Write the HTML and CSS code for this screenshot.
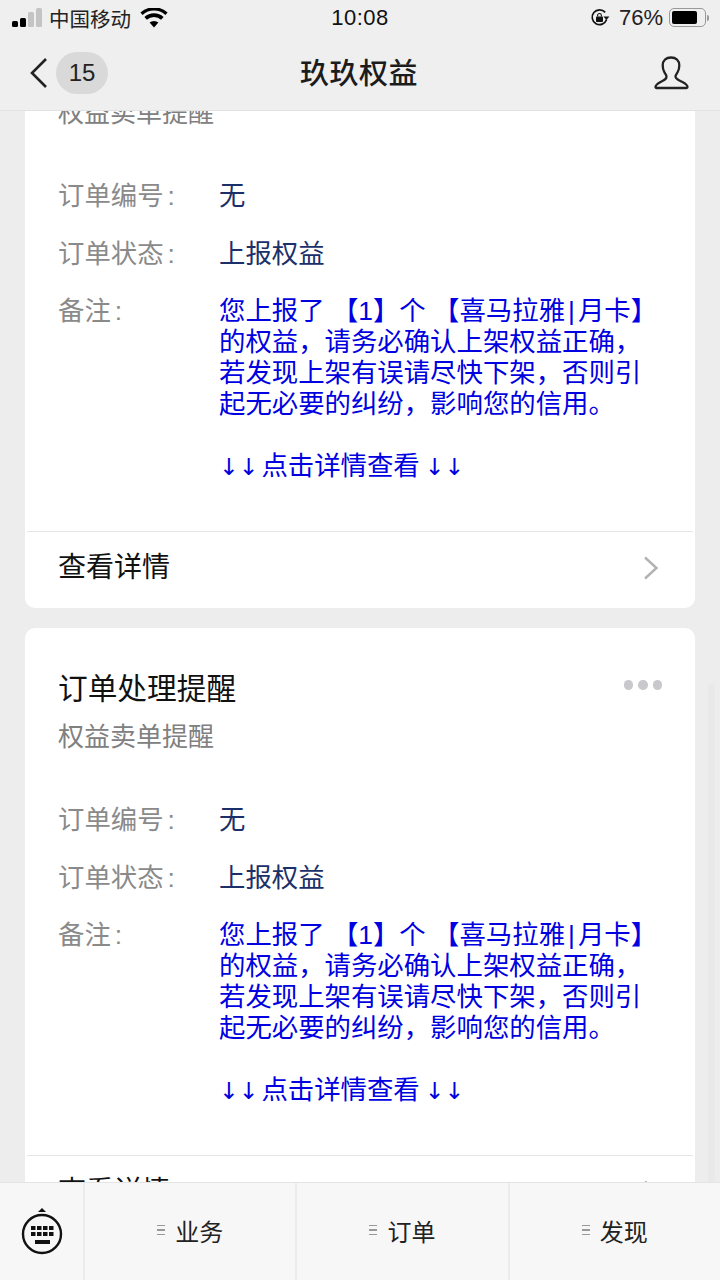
FILE: index.html
```html
<!DOCTYPE html>
<html lang="zh-CN">
<head>
	<meta charset="UTF-8">
	<title>玖玖权益</title>
	<link rel="stylesheet" href="styles.css">
</head>
<body>
	<div class="page">
		<header class="top">
			<div class="status">
				<div class="status-left">
					<ul class="signal"><li></li><li></li><li></li><li></li></ul>
					<span class="carrier">中国移动</span>
					<svg class="wifi" width="28" height="20" viewBox="0 0 28 20"><path d="M14 19.500 9.600 14.600a6.600 6.600 0 0 1 8.800 0zM6.900 11.700 4.400 8.900a14.400 14.400 0 0 1 19.200 0l-2.500 2.800a10.600 10.600 0 0 0-14.200 0zM2.600 7 .4 4.500a20.300 20.300 0 0 1 27.200 0L25.400 7a17 17 0 0 0-22.800 0z" fill="#000"/></svg>
				</div>
				<span class="time">10:08</span>
				<div class="status-right">
					<svg width="20" height="20" viewBox="0 0 20 20"><path d="M16.600 11.600A7.400 7.400 0 1 1 15.200 4.400" fill="none" stroke="#111" stroke-width="1.700"/><path d="M13.400 8.600h6l-3 3.400z" fill="#111"/><rect x="6" y="8.600" width="7" height="5.400" rx=".8" fill="#111"/><path d="M7.600 8.600V7.400a1.900 1.900 0 0 1 3.800 0v1.200" fill="none" stroke="#111" stroke-width="1.100"/></svg>
					<span class="percent">76%</span>
					<div class="battery"><div class="battery-level"></div></div>
					<div class="battery-tip"></div>
				</div>
			</div>
			<nav class="nav">
				<div class="nav-left">
					<svg width="20" height="32" viewBox="0 0 20 32"><path d="M17 2 3 16l14 14" fill="none" stroke="#222" stroke-width="2.600"/></svg>
					<span class="count">15</span>
				</div>
				<h1 class="nav-title">玖玖权益</h1>
				<svg class="user" width="36" height="34" viewBox="0 0 36 34"><path d="M13.500 20.500c0-1.500-1.200-2.500-2.200-4.500C10 13.500 9.700 11.500 9.700 9.500 9.700 4.500 13 1.500 18 1.500s8.300 3 8.300 8c0 2-.3 4-1.600 6.500-1 2-2.200 3-2.200 4.500 0 2.500 3 3.500 6.500 5.300 3.300 1.700 5.500 3.200 5.500 5.200 0 .6-.4 1-1 1H3.500c-.6 0-1-.4-1-1 0-2 2.200-3.500 5.500-5.200 3.500-1.800 5.500-2.800 5.500-5.300z" fill="none" stroke="#222" stroke-width="2.300"/></svg>
			</nav>
		</header>

		<main class="content">
			<section class="card card-first">
				<div class="card-body">
					<div class="card-head">
						<h2 class="card-title">订单处理提醒</h2>
						<div class="dots"><i></i><i></i><i></i></div>
					</div>
					<p class="card-sub">权益卖单提醒</p>
					<dl class="rows">
						<div class="row"><dt>订单编号<span class="colon">:</span></dt><dd>无</dd></div>
						<div class="row"><dt>订单状态<span class="colon">:</span></dt><dd>上报权益</dd></div>
						<div class="row"><dt>备注<span class="colon">:</span></dt><dd class="note">您上报了 【1】个 【喜马拉雅<span class="sep">|</span>月卡】的权益，请务必确认上架权益正确，若发现上架有误请尽快下架，否则引起无必要的纠纷，影响您的信用。<br><br><span class="arrows">↓↓</span>点击详情查看<span class="arrows">↓↓</span></dd></div>
					</dl>
				</div>
				<div class="card-foot">
					<span class="foot-text">查看详情</span>
					<svg width="16" height="24" viewBox="0 0 16 24"><path d="M2 1.500 13.500 12 2 22.500" fill="none" stroke="#b2b2b2" stroke-width="2.400"/></svg>
				</div>
			</section>

			<section class="card">
				<div class="card-body">
					<div class="card-head">
						<h2 class="card-title">订单处理提醒</h2>
						<div class="dots"><i></i><i></i><i></i></div>
					</div>
					<p class="card-sub">权益卖单提醒</p>
					<dl class="rows">
						<div class="row"><dt>订单编号<span class="colon">:</span></dt><dd>无</dd></div>
						<div class="row"><dt>订单状态<span class="colon">:</span></dt><dd>上报权益</dd></div>
						<div class="row"><dt>备注<span class="colon">:</span></dt><dd class="note">您上报了 【1】个 【喜马拉雅<span class="sep">|</span>月卡】的权益，请务必确认上架权益正确，若发现上架有误请尽快下架，否则引起无必要的纠纷，影响您的信用。<br><br><span class="arrows">↓↓</span>点击详情查看<span class="arrows">↓↓</span></dd></div>
					</dl>
				</div>
				<div class="card-foot">
					<span class="foot-text">查看详情</span>
					<svg width="16" height="24" viewBox="0 0 16 24"><path d="M2 1.500 13.500 12 2 22.500" fill="none" stroke="#b2b2b2" stroke-width="2.400"/></svg>
				</div>
			</section>
			<div class="scrollbar"></div>
		</main>

		<footer class="tabbar">
			<div class="tab-key">
				<svg width="42" height="48" viewBox="0 0 42 48"><path d="M21 1l4 4h-8z" fill="#111"/><circle cx="21" cy="27" r="19" fill="none" stroke="#111" stroke-width="2.400"/><g fill="#111"><rect x="10" y="19" width="4.500" height="4"/><rect x="16" y="19" width="4.500" height="4"/><rect x="22" y="19" width="4.500" height="4"/><rect x="28" y="19" width="4.500" height="4"/><rect x="10" y="25" width="4.500" height="4"/><rect x="16" y="25" width="4.500" height="4"/><rect x="22" y="25" width="4.500" height="4"/><rect x="28" y="25" width="4.500" height="4"/><rect x="14" y="33" width="15" height="4"/></g></svg>
			</div>
			<div class="tab"><span class="tab-mark"><i></i><i></i><i></i></span>业务</div>
			<div class="tab"><span class="tab-mark"><i></i><i></i><i></i></span>订单</div>
			<div class="tab"><span class="tab-mark"><i></i><i></i><i></i></span>发现</div>
		</footer>
	</div>
</body>
</html>
```

FILE: styles.css
```css
* {
	margin:0;
	padding:0;
	box-sizing:border-box;
}
html,body {
	height:100%;
	overflow:hidden;
}
body {
	font-family:"Liberation Sans","Noto Sans CJK SC",sans-serif;
	background:#ededed;
}
ul {
	list-style:none;
}
.page {
	display:flex;
	flex-direction:column;
	height:1280px;
}
.top {
	flex:none;
	height:111px;
	background:#efefef;
	border-bottom:1px solid #e2e2e2;
	position:relative;
	z-index:2;
}
.status {
	height:35px;
	padding:0 9px 0 12px;
	display:grid;
	grid-template-columns:1fr auto 1fr;
	align-items:center;
}
.status-left {
	display:flex;
	align-items:center;
}
.signal {
	display:flex;
	align-items:flex-end;
	gap:2px;
	height:19px;
	margin-right:7px;
}
.signal li {
	width:6px;
	background:#c4c4c4;
	border-radius:1.500px;
}
.signal li:nth-child(1) {
	height:6px;
	background:#000;
}
.signal li:nth-child(2) {
	height:9px;
	background:#000;
}
.signal li:nth-child(3) {
	height:15px;
}
.signal li:nth-child(4) {
	height:19px;
}
.carrier {
	font-size:20.500px;
	color:#222;
}
.wifi {
	margin-left:9px;
}
.time {
	font-size:22px;
	color:#111;
	letter-spacing:.5px;
	margin-right:3px;
}
.status-right {
	display:flex;
	align-items:center;
	justify-content:flex-end;
}
.percent {
	font-size:22px;
	color:#222;
	margin-left:9px;
}
.battery {
	width:37px;
	height:19px;
	margin-left:6px;
	border:1.500px solid #999;
	border-radius:5px;
	padding:2px;
}
.battery-level {
	width:76%;
	height:100%;
	min-width:25px;
	background:#000;
	border-radius:2px;
}
.battery-tip {
	width:2px;
	height:6px;
	margin-left:1px;
	margin-right:2px;
	background:#999;
	border-radius:0 2px 2px 0;
}
.nav {
	height:75px;
	padding:0 31px 0 29px;
	display:flex;
	align-items:center;
	justify-content:space-between;
	position:relative;
}
.nav-left {
	display:flex;
	align-items:center;
	gap:7px;
}
.count {
	width:52px;
	height:42px;
	border-radius:21px;
	background:#d9d9d9;
	font-size:24px;
	color:#222;
	display:flex;
	align-items:center;
	justify-content:center;
}
.nav-title {
	position:absolute;
	left:0;
	right:2px;
	padding-bottom:4px;
	text-align:center;
	font-size:29px;
	font-weight:500;
	color:#1c1c1c;
	letter-spacing:.5px;
	pointer-events:none;
}
.content {
	flex:1;
	min-height:0;
	overflow:hidden;
	position:relative;
	padding:0 25px;
}
.card {
	background:#fff;
	border-radius:10px;
	margin-bottom:20px;
}
.card-first {
	margin-top:-107px;
}
.card-body {
	height:527px;
	padding:40px 33px 0;
}
.card-head {
	display:flex;
	justify-content:space-between;
	align-items:flex-start;
}
.card-title {
	font-size:29.700px;
	font-weight:400;
	line-height:42px;
	color:#111;
}
.dots {
	display:flex;
	gap:5px;
	padding-top:12px;
}
.dots i {
	width:9.500px;
	height:9.500px;
	border-radius:50%;
	background:#c8c8cd;
}
.card-sub {
	font-size:26px;
	line-height:36px;
	margin-top:9px;
	color:#808080;
}
.rows {
	margin-top:50px;
	font-size:26.400px;
	line-height:31px;
}
.row {
	display:flex;
	margin-bottom:26.500px;
}
.row dt {
	flex:none;
	width:162px;
	color:#8a8a8a;
}
.colon {
	margin-left:4px;
}
.row dd {
	flex:1;
	margin-left:-1px;
	color:#1b3068;
}
.row .note {
	color:#0000e0;
	width:432px;
	margin-right:-5px;
}
.sep {
	margin:0 3px;
}
.arrows {
	font-family:"DejaVu Sans",sans-serif;
	font-size:23.500px;
	margin:0 3px 0 0;
}
.arrows:last-child {
	margin:0 0 0 5px;
}
.card-foot {
	height:77px;
	margin-left:2px;
	margin-right:2px;
	padding:0 34px 5px 31px;
	border-top:1px solid #e6e6e6;
	display:flex;
	align-items:center;
	justify-content:space-between;
	font-size:28px;
	color:#111;
}
.foot-text {
	margin-bottom:6px;
}
.scrollbar {
	position:absolute;
	right:5px;
	top:572px;
	width:7px;
	height:499px;
	border-radius:3px;
	background:#e9e9e9;
}
.tabbar {
	flex:none;
	height:98px;
	background:#f7f7f7;
	border-top:1px solid #e4e4e4;
	display:flex;
	position:relative;
	z-index:2;
}
.tab-key {
	flex:none;
	width:83px;
	padding-bottom:2px;
	padding-left:1px;
	display:flex;
	align-items:center;
	justify-content:center;
}
.tab {
	flex:1;
	border-left:2px solid #ececec;
	display:flex;
	align-items:center;
	justify-content:center;
	padding-bottom:3px;
	font-size:24px;
	color:#222;
}
.tab-mark {
	display:flex;
	flex-direction:column;
	gap:3px;
	margin-right:10px;
}
.tab-mark i {
	width:8px;
	height:1.500px;
	background:#999;
}
```
